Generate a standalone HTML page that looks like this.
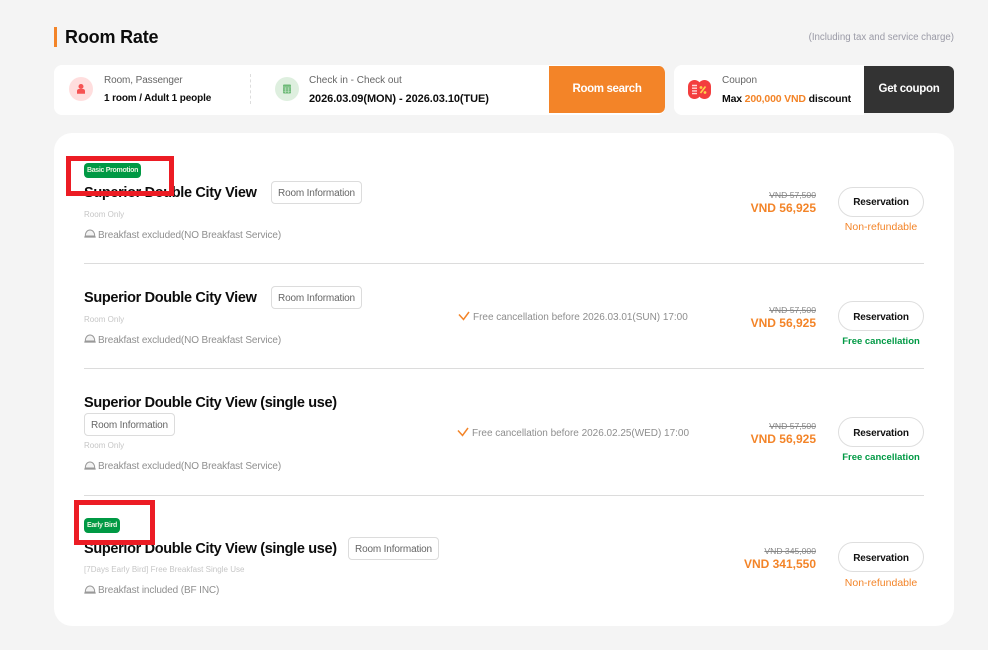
<!DOCTYPE html>
<html><head><meta charset="utf-8"><style>
*{box-sizing:border-box;margin:0;padding:0}
html,body{width:988px;height:650px;overflow:hidden;background:#f4f4f4;font-family:"Liberation Sans",sans-serif}
.a{position:absolute;white-space:nowrap}
.name{font-size:14.500px;font-weight:700;color:#0c0c0c;letter-spacing:-.34px;line-height:20px;position:absolute;white-space:nowrap;left:84px}
.info{position:absolute;height:23px;border:1px solid #dcdcdc;border-radius:4px;font-size:10px;color:#666;line-height:23px;text-align:center;background:#fff;white-space:nowrap;letter-spacing:-.16px}
.sub{position:absolute;left:84px;font-size:8px;color:#c6c6c6;white-space:nowrap;line-height:12px;letter-spacing:.02px}
.bf{position:absolute;left:98px;font-size:10px;color:#8f8f8f;white-space:nowrap;line-height:14px;letter-spacing:-.12px}
.ic{position:absolute;left:84px;width:12px;height:9px}
.old{position:absolute;right:172px;font-size:8.600px;color:#888;text-decoration:line-through;white-space:nowrap;line-height:12px}
.pr{position:absolute;right:172px;font-size:12px;font-weight:700;color:#f38428;white-space:nowrap;line-height:16px}
.btn{position:absolute;left:838px;width:86px;height:30px;border:1px solid #dedede;border-radius:15px;background:#fff;font-size:10px;font-weight:700;color:#111;text-align:center;line-height:30px;letter-spacing:-.15px}
.st{position:absolute;left:838px;width:86px;text-align:center;font-size:10.500px;line-height:14px;white-space:nowrap}
.g{font-size:9.500px;color:#009944;font-weight:700}
.hr{position:absolute;left:84px;width:840px;height:1px;background:#dcdcdc}
.tag{position:absolute;height:15px;background:#009944;border-radius:4px;color:#e8f5e0;font-size:7px;font-weight:700;line-height:16px;text-align:center;white-space:nowrap;letter-spacing:-.3px}
.red{position:absolute;border:5px solid #ec1c24}
.fc{position:absolute;font-size:10px;color:#8e8e8e;white-space:nowrap;line-height:14px;letter-spacing:-.02px}
.lab{position:absolute;font-size:10px;color:#666;line-height:14px;white-space:nowrap}
.val{position:absolute;font-weight:700;color:#0c0c0c;line-height:14px;white-space:nowrap}
</style></head><body>

<div class="a" style="left:54px;top:27px;width:3px;height:20px;background:#f38428"></div>
<div class="a" style="left:65px;top:26px;font-size:18px;font-weight:700;color:#0c0c0c;line-height:22px;letter-spacing:-.18px">Room Rate</div>
<div class="a" style="right:34px;top:31px;font-size:9.700px;color:#9a9aa6;line-height:14px">(Including tax and service charge)</div>

<div class="a" style="left:54px;top:65px;width:611px;height:50px;background:#fff;border-radius:8px;overflow:hidden">
  <div class="a" style="left:495px;top:1px;width:116px;height:47px;background:#f38428;border-radius:0 6px 6px 0;color:#fff;font-size:11.500px;font-weight:700;text-align:center;line-height:47px;letter-spacing:-.35px">Room search</div>
</div>
<svg class="a" style="left:69px;top:77px" width="24" height="24" viewBox="0 0 24 24"><circle cx="12" cy="12" r="12" fill="#ffdede"/><circle cx="12" cy="9.500" r="2.500" fill="#f65353"/><path d="M8 16.800v-2.800c0-1.200.9-2 2-2h4c1.100 0 2 .8 2 2v2.800z" fill="#f65353"/></svg>
<div class="lab" style="left:104px;top:74px;letter-spacing:-.1px">Room, Passenger</div>
<div class="val" style="left:104px;top:92px;font-size:10px;letter-spacing:-.13px">1 room / Adult 1 people</div>
<div class="a" style="left:250px;top:74px;height:30px;border-left:1px dashed #ddd"></div>
<svg class="a" style="left:275px;top:77px" width="24" height="24" viewBox="0 0 24 24"><circle cx="12" cy="12" r="12" fill="#deefdf"/><rect x="8" y="7.500" width="8" height="9" rx="1" fill="#6dba77"/><path d="M8 10h8M8.500 12h7M8.500 14.200h7M10.500 10.500v5.500M13.500 10.500v5.500" stroke="#c6e4c9" stroke-width=".6"/></svg>
<div class="lab" style="left:309px;top:74px">Check in - Check out</div>
<div class="val" style="left:309px;top:92px;font-size:11px;letter-spacing:-.07px">2026.03.09(MON) - 2026.03.10(TUE)</div>

<div class="a" style="left:674px;top:65px;width:190px;height:50px;background:#fff;border-radius:8px 0 0 8px"></div>
<div class="a" style="left:864px;top:66px;width:90px;height:47px;background:#333;border-radius:0 6px 6px 0;color:#fff;font-size:11.500px;font-weight:700;text-align:center;line-height:47px;letter-spacing:-.3px">Get coupon</div>
<svg class="a" style="left:688px;top:80px" width="23" height="19" viewBox="0 0 23 19"><rect x="0" y="0" width="13" height="19" rx="6.500" fill="#f33e3e"/><rect x="10" y="0" width="13" height="19" rx="6.500" fill="#f33e3e"/><path d="M4 5.500h5M4 8.200h5M4 10.900h5M4 13.600h5" stroke="#ffd9d9" stroke-width="1.400"/><path d="M12.500 13l5-6.500" stroke="#ffd24a" stroke-width="1.600"/><circle cx="13" cy="7.500" r="1.400" fill="#ffd24a"/><circle cx="17" cy="12.500" r="1.400" fill="#ffd24a"/></svg>
<div class="lab" style="left:722px;top:74px">Coupon</div>
<div class="val" style="left:722px;top:92px;font-size:10.500px;letter-spacing:-.17px">Max <span style="color:#f38428">200,000 VND</span> discount</div>

<div class="a" style="left:54px;top:133px;width:900px;height:493px;background:#fff;border-radius:18px"></div>

<!-- Row 1 -->
<div class="tag" style="left:84px;top:163px;width:57px">Basic Promotion</div>
<div class="name" style="top:183px">Superior Double City View</div>
<div class="red" style="left:66px;top:156px;width:108px;height:40px"></div>
<div class="info" style="left:271px;top:181px;width:91px">Room Information</div>
<div class="sub" style="top:209px">Room Only</div>
<svg class="ic" style="top:229px" viewBox="0 0 12 9"><path d="M1.300 7C1.300 3.500 3.200 1 6 1s4.700 2.500 4.700 6z" fill="#f3f3f3" stroke="#999" stroke-width="1"/><path d="M.3 8h11.400" stroke="#999" stroke-width="1.300"/></svg>
<div class="bf" style="top:229px">Breakfast excluded(NO Breakfast Service)</div>
<div class="old" style="top:189px">VND 57,500</div>
<div class="pr" style="top:200px">VND 56,925</div>
<div class="btn" style="top:187px">Reservation</div>
<div class="st" style="top:220px;color:#f38428">Non-refundable</div>
<div class="hr" style="top:263px"></div>

<!-- Row 2 -->
<div class="name" style="top:288px">Superior Double City View</div>
<div class="info" style="left:271px;top:286px;width:91px">Room Information</div>
<div class="sub" style="top:314px">Room Only</div>
<svg class="ic" style="top:334px" viewBox="0 0 12 9"><path d="M1.300 7C1.300 3.500 3.200 1 6 1s4.700 2.500 4.700 6z" fill="#f3f3f3" stroke="#999" stroke-width="1"/><path d="M.3 8h11.400" stroke="#999" stroke-width="1.300"/></svg>
<div class="bf" style="top:334px">Breakfast excluded(NO Breakfast Service)</div>
<svg class="a" style="left:458px;top:311px" width="12" height="10" viewBox="0 0 12 10"><path d="M1 3.500l4.500 5L11 1" fill="none" stroke="#f38428" stroke-width="1.500"/></svg>
<div class="fc" style="left:473px;top:311px">Free cancellation before 2026.03.01(SUN) 17:00</div>
<div class="old" style="top:304px">VND 57,500</div>
<div class="pr" style="top:315px">VND 56,925</div>
<div class="btn" style="top:301px;line-height:32px">Reservation</div>
<div class="st g" style="top:335px">Free cancellation</div>
<div class="hr" style="top:368px"></div>

<!-- Row 3 -->
<div class="name" style="top:393px">Superior Double City View (single use)</div>
<div class="info" style="left:84px;top:413px;width:91px">Room Information</div>
<div class="sub" style="top:440px">Room Only</div>
<svg class="ic" style="top:461px" viewBox="0 0 12 9"><path d="M1.300 7C1.300 3.500 3.200 1 6 1s4.700 2.500 4.700 6z" fill="#f3f3f3" stroke="#999" stroke-width="1"/><path d="M.3 8h11.400" stroke="#999" stroke-width="1.300"/></svg>
<div class="bf" style="top:460px">Breakfast excluded(NO Breakfast Service)</div>
<svg class="a" style="left:457px;top:427px" width="12" height="10" viewBox="0 0 12 10"><path d="M1 3.500l4.500 5L11 1" fill="none" stroke="#f38428" stroke-width="1.500"/></svg>
<div class="fc" style="left:472px;top:427px">Free cancellation before 2026.02.25(WED) 17:00</div>
<div class="old" style="top:420px">VND 57,500</div>
<div class="pr" style="top:431px">VND 56,925</div>
<div class="btn" style="top:417px;line-height:32px">Reservation</div>
<div class="st g" style="top:451px">Free cancellation</div>
<div class="hr" style="top:495px"></div>

<!-- Row 4 -->
<div class="tag" style="left:84px;top:518px;width:36px">Early Bird</div>
<div class="name" style="top:539px">Superior Double City View (single use)</div>
<div class="red" style="left:74px;top:500px;width:81px;height:45px"></div>
<div class="info" style="left:348px;top:537px;width:91px">Room Information</div>
<div class="sub" style="top:564px">[7Days Early Bird] Free Breakfast Single Use</div>
<svg class="ic" style="top:585px" viewBox="0 0 12 9"><path d="M1.300 7C1.300 3.500 3.200 1 6 1s4.700 2.500 4.700 6z" fill="#f3f3f3" stroke="#999" stroke-width="1"/><path d="M.3 8h11.400" stroke="#999" stroke-width="1.300"/></svg>
<div class="bf" style="top:584px">Breakfast included (BF INC)</div>
<div class="old" style="top:545px">VND 345,000</div>
<div class="pr" style="top:556px">VND 341,550</div>
<div class="btn" style="top:542px;line-height:32px">Reservation</div>
<div class="st" style="top:576px;color:#f38428">Non-refundable</div>

</body></html>
